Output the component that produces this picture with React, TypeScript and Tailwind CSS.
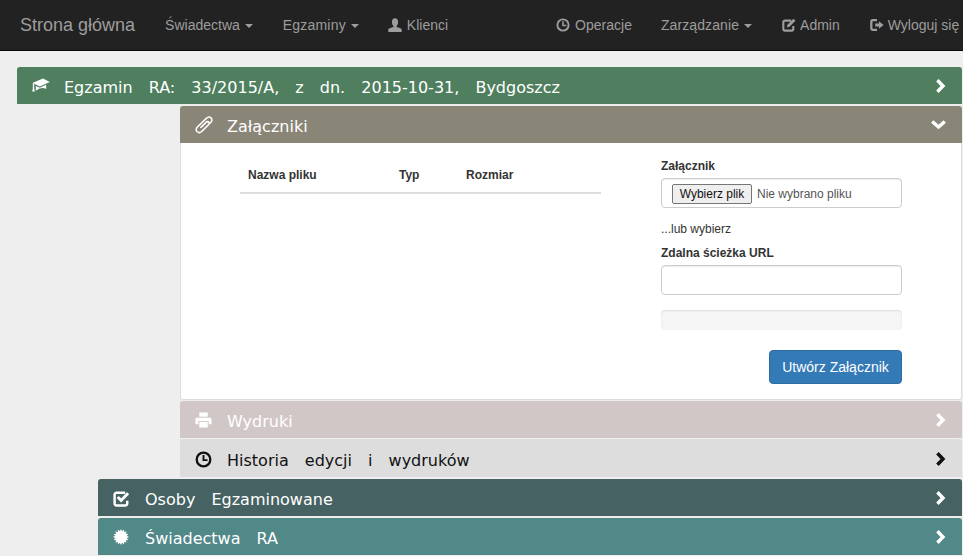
function ClockIcon({className}: {className?: string}) {
    return (
        <svg viewBox="0 0 16 16" className={className} fill="none" stroke="currentColor">
            <circle cx="8" cy="8" r="6.4" strokeWidth="2.2"/>
            <path d="M8 3.8v4.8h3.8" strokeWidth="1.8"/>
        </svg>
    )
}

function EditIcon({className}: {className?: string}) {
    return (
        <svg viewBox="0 0 16 16" className={className} fill="none">
            <path d="M10.5 3H3.2A1.7 1.7 0 0 0 1.5 4.7v8A1.7 1.7 0 0 0 3.2 14.4h8a1.7 1.7 0 0 0 1.7-1.7V9" stroke="currentColor" strokeWidth="2.4"/>
            <path d="M13 .8l2.4 2.4-6.8 6.8-3.2.8.8-3.2z" fill="currentColor"/>
        </svg>
    )
}

function CheckIcon({className}: {className?: string}) {
    return (
        <svg viewBox="0 0 16 16" className={className} fill="none">
            <path d="M11.5 2.6H3.2A1.7 1.7 0 0 0 1.5 4.3v8.5a1.7 1.7 0 0 0 1.7 1.7h8.5a1.7 1.7 0 0 0 1.7-1.7V10" stroke="currentColor" strokeWidth="2.3"/>
            <path d="M4.4 6.6l3.2 3.2 6.6-6.8" stroke="currentColor" strokeWidth="2.8"/>
        </svg>
    )
}

function LogoutIcon({className}: {className?: string}) {
    return (
        <svg viewBox="0 0 16 16" className={className} fill="none">
            <path d="M8 2.5H3.2A1.7 1.7 0 0 0 1.5 4.2v7.6a1.7 1.7 0 0 0 1.7 1.7H8" stroke="currentColor" strokeWidth="2.6"/>
            <path d="M6 6.4h4.2V3.6L15.6 8l-5.4 4.4V9.6H6z" fill="currentColor"/>
        </svg>
    )
}

function PaperclipIcon({className}: {className?: string}) {
    return (
        <svg viewBox="0 0 18 18" className={className} fill="none" stroke="currentColor" strokeWidth="1.5">
            <path d="M6.5 15.5L15.5 6.8C17.6 4.8 17.2 3 16 1.9 14.7.7 13 .8 11.3 2.4L2.6 10.8C.6 12.8 1 14.6 2.2 15.8 3.5 17 5.2 16.9 7 15.2L13.3 9C14.5 7.8 14.4 6.8 13.7 6.1 12.9 5.4 11.9 5.5 10.800 6.600L5.400 11.900"/>
        </svg>
    )
}

function CapIcon({className}: {className?: string}) {
    return (
        <svg viewBox="0 0 18 16" className={className} fill="currentColor">
            <path d="M.4 5L11 .4l6.800 3.600-10 4.500z"/>
            <path d="M3.800 8l4 1.700 6.400-2.900v4.200c-3-1.700-6.700-1-9.400 1.400L3.800 11.800z"/>
            <path d="M.8 5.400h1.400v5.400l.8 2.800H.2l.6-2.800z"/>
        </svg>
    )
}

function UserIcon({className}: {className?: string}) {
    return (
        <svg viewBox="0 0 14 14" className={className} fill="currentColor">
            <path d="M7 .3c2 0 3.100 1.500 3.100 3.600 0 1.600-.6 3-1.500 3.900v1.300c2 .8 4.600 1 5.100 2.400V14H.3v-2.500C.8 10.100 3.400 9.900 5.400 9.100V7.800C4.500 6.900 3.900 5.500 3.900 3.900 3.900 1.800 5 .3 7 .3z"/>
        </svg>
    )
}

function PrintIcon({className}: {className?: string}) {
    return (
        <svg viewBox="0 0 18 17" className={className} fill="currentColor">
            <path d="M4.500 .5h9v4.500h-9z"/>
            <path d="M2 6h14a1.500 1.500 0 0 1 1.500 1.500V13H14.500v-3.500h-11V13H.5V7.500A1.500 1.500 0 0 1 2 6z"/>
            <path d="M4.500 10.500h9v6h-9z"/>
        </svg>
    )
}

// spiky circle, same as the certificate glyph
const burst = Array.from({length: 32}, (_, i) => {
    const r = i % 2 === 0 ? 8 : 5.8
    const a = (i * Math.PI) / 16
    return `${(8 + r * Math.sin(a)).toFixed(2)},${(8 - r * Math.cos(a)).toFixed(2)}`
}).join(" ")

function BurstIcon({className}: {className?: string}) {
    return (
        <svg viewBox="0 0 16 16" className={className} fill="currentColor">
            <polygon points={burst}/>
        </svg>
    )
}

function ChevronRight() {
    return (
        <svg viewBox="0 0 11 14" className="w-[11px] h-[14px]" fill="none" stroke="currentColor" strokeWidth="3.4">
            <path d="M2.400 1.200L8 7l-5.600 5.800"/>
        </svg>
    )
}

function ChevronDown() {
    return (
        <svg viewBox="0 0 15 11" className="w-[15px] h-[11px]" fill="none" stroke="currentColor" strokeWidth="3.4">
            <path d="M1.200 2.400L7.500 8l6.300-5.600"/>
        </svg>
    )
}

function Caret() {
    return <span className="ml-[5px] inline-block w-0 h-0 align-middle border-x-4 border-t-4 border-x-transparent border-t-[#9d9d9d]"/>
}

function NavLink({icon, label, caret, className = "px-[15px] gap-[4px]", labelClass = ""}: {
    icon?: React.ReactNode;
    label: string;
    caret?: boolean;
    className?: string;
    labelClass?: string;
}) {
    return (
        <a className={`flex items-center h-[50px] shrink-0 text-sm text-[#9d9d9d] ${className}`}>
            {icon}
            <span className={labelClass}>{label}{caret && <Caret/>}</span>
        </a>
    )
}

function Heading({icon, label, bg, open, text = "text-white", className = "h-[37px] pt-[4px]"}: {
    icon: React.ReactNode;
    label: string;
    bg: string;
    open?: boolean;
    text?: string;
    className?: string;
}) {
    return (
        <div className={`flex items-center pl-[15px] pr-[16px] rounded-t-[3px] font-['DejaVu_Sans',sans-serif] text-base [word-spacing:11px] ${bg} ${text} ${className}`}>
            <span className="w-[32px] shrink-0 -mt-[3px] flex">{icon}</span>
            <span className="whitespace-nowrap">{label}</span>
            <span className="ml-auto -mt-[4px] flex">
                {open ? <ChevronDown/> : <ChevronRight/>}
            </span>
        </div>
    )
}

export default function App() {
    return (
        <div className="h-[556px] w-[963px] overflow-hidden bg-[#eeeeee] font-['Liberation_Sans',Arial,sans-serif]">
            <nav className="flex h-[51px] pl-[5px] bg-[#222222] border-b border-[#080808] overflow-hidden">
                <a className="px-[15px] h-[50px] flex items-center shrink-0 text-[18px] text-[#9d9d9d]">Strona główna</a>
                <NavLink label="Świadectwa" caret/>
                <NavLink label="Egzaminy" caret className="pl-[15px] pr-[14px]" labelClass="tracking-[0.2px]"/>
                <NavLink label="Klienci" className="px-[15px] gap-[5px]" icon={<UserIcon className="w-[14px] h-[14px]"/>}/>
                <div className="flex ml-[78px]">
                    <NavLink label="Operacje" className="pl-[15px] pr-[14px] gap-[5px]" icon={<ClockIcon className="w-[14px] h-[14px]"/>}/>
                    <NavLink label="Zarządzanie" caret labelClass="tracking-[0.1px]"/>
                    <NavLink label="Admin" icon={<EditIcon className="w-[14px] h-[14px]"/>}/>
                    <NavLink label="Wyloguj się" icon={<LogoutIcon className="w-[14px] h-[14px]"/>}/>
                </div>
            </nav>

            <div className="pt-[16px] pl-[17px] pr-px">
                <Heading bg="bg-[#4f7f5f]" label="Egzamin RA: 33/2015/A, z dn. 2015-10-31, Bydgoszcz"
                         icon={<CapIcon className="w-[18px] h-[16px]"/>}/>
                <div className="mt-[2px] ml-[81px]">
                    <div className="ml-[82px]">
                        <Heading bg="bg-[#898577]" label="Załączniki" open
                                 icon={<PaperclipIcon className="w-[18px] h-[18px]"/>}/>
                        <div className="flex h-[257px] bg-white border border-t-0 border-[#dddddd] rounded-b-[3px] text-xs text-[#333333]">
                            <div className="ml-[59px] w-[361px] mt-[15px]">
                                <div className="flex h-[36px] items-center pl-[8px] font-bold border-b-2 border-[#dddddd]">
                                    <span className="w-[151px]">Nazwa pliku</span>
                                    <span className="w-[67px]">Typ</span>
                                    <span>Rozmiar</span>
                                </div>
                            </div>
                            <div className="ml-[60px] w-[241px] flex flex-col">
                                <label className="mt-[15px] font-bold leading-[17px]">Załącznik</label>
                                <div className="mt-[3px] h-[30px] flex items-center pl-[10px] pt-px bg-white border border-[#cccccc] rounded-[4px] text-[#555555] shadow-[inset_0_1px_1px_rgba(0,0,0,0.075)]">
                                    <span className="flex items-center justify-center w-[80px] h-[20px] bg-[#efefef] border border-[#767676] rounded-[2px] text-[#111111]">Wybierz plik</span>
                                    <span className="ml-[5px]">Nie wybrano pliku</span>
                                </div>
                                <p className="mt-[13px] leading-[17px]">...lub wybierz</p>
                                <label className="mt-[7px] font-bold leading-[17px]">Zdalna ścieżka URL</label>
                                <div className="mt-[3px] h-[30px] bg-white border border-[#cccccc] rounded-[4px] shadow-[inset_0_1px_1px_rgba(0,0,0,0.075)]"/>
                                <div className="mt-[15px] h-[20px] bg-[#f5f5f5] rounded-[4px] shadow-[inset_0_1px_2px_rgba(0,0,0,0.1)]"/>
                                <button className="mt-[20px] self-end w-[133px] h-[34px] bg-[#337ab7] border border-[#2e6da4] rounded-[4px] text-sm text-white">Utwórz Załącznik</button>
                            </div>
                        </div>
                        <Heading bg="bg-[#d2c7c7]" label="Wydruki" className="mt-px h-[37px] pt-[4px]"
                                 icon={<PrintIcon className="w-[17px] h-[16px]"/>}/>
                        <Heading bg="bg-[#dddddd]" label="Historia edycji i wydruków" text="text-[#111111]" className="mt-px h-[38px] pt-[5px]"
                                 icon={<ClockIcon className="w-[17px] h-[17px]"/>}/>
                    </div>
                    <Heading bg="bg-[#466262]" label="Osoby Egzaminowane" className="mt-[2px] h-[37px] pt-[4px]"
                             icon={<CheckIcon className="w-[17px] h-[17px]"/>}/>
                    <Heading bg="bg-[#518888]" label="Świadectwa RA" className="mt-[2px] h-[37px] pt-[4px]"
                             icon={<BurstIcon className="w-[16px] h-[16px]"/>}/>
                </div>
            </div>
        </div>
    )
}
